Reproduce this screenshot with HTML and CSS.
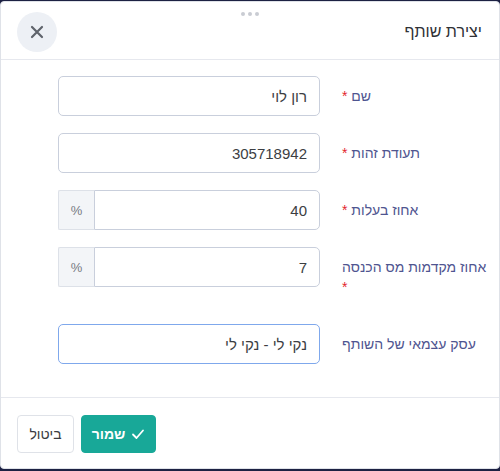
FILE: index.html
```html
<!DOCTYPE html>
<html lang="he" dir="rtl">
    <head>
        <meta charset="utf-8">
        <link rel="stylesheet" href="styles.css">
    </head>
    <body>
        <div class="modal">
            <div class="modalHeader">
                <div class="dragHandle"><span></span><span></span><span></span></div>
                <div class="modalTitle">יצירת שותף</div>
                <button class="closeButton" type="button">
                    <svg width="14" height="14" viewBox="0 0 14 14">
                        <path d="M2 2 L12 12 M12 2 L2 12" stroke="#5f636b" stroke-width="2.2" stroke-linecap="round"/>
                    </svg>
                </button>
            </div>

            <div class="modalBody">
                <div class="formRow">
                    <label class="formLabel">שם <span class="required">*</span></label>
                    <div class="formField">
                        <input class="textInput" type="text" value="רון לוי">
                    </div>
                </div>
                <div class="formRow">
                    <label class="formLabel">תעודת זהות <span class="required">*</span></label>
                    <div class="formField">
                        <input class="textInput" type="text" value="305718942">
                    </div>
                </div>
                <div class="formRow">
                    <label class="formLabel">אחוז בעלות <span class="required">*</span></label>
                    <div class="formField inputGroup">
                        <input class="textInput" type="text" value="40">
                        <span class="inputAddon">%</span>
                    </div>
                </div>
                <div class="formRow">
                    <label class="formLabel">אחוז מקדמות מס הכנסה <span class="required">*</span></label>
                    <div class="formField inputGroup">
                        <input class="textInput" type="text" value="7">
                        <span class="inputAddon">%</span>
                    </div>
                </div>
                <div class="formRow">
                    <label class="formLabel">עסק עצמאי של השותף</label>
                    <div class="formField">
                        <input class="textInput focused" type="text" value="נקי לי - נקי לי">
                    </div>
                </div>
            </div>

            <div class="modalFooter">
                <button class="btn btnSave" type="button">
                    <svg width="14" height="14" viewBox="0 0 14 14">
                        <path d="M2 7.5 L5.5 11 L12 3.5" fill="none" stroke="#fff" stroke-width="1.8" stroke-linecap="round" stroke-linejoin="round"/>
                    </svg>
                    שמור
                </button>
                <button class="btn btnCancel" type="button">ביטול</button>
            </div>
        </div>
    </body>
</html>
```

FILE: styles.css
```css
body {
    margin: 0;
    background: #1d2143;
    font-family: "Liberation Sans", Arial, sans-serif;
    overflow: hidden;
}

.modal {
    margin-top: 1px;
    height: 468px;
    box-sizing: border-box;
    background: #fff;
    border: 1px solid #dfe2e8;
    border-radius: 4px;
    display: flex;
    flex-direction: column;
}

.modalHeader {
    position: relative;
    height: 58px;
    box-sizing: border-box;
    display: flex;
    align-items: center;
    justify-content: space-between;
    padding: 0 17px 0 16px;
    border-bottom: 1px solid #e6e8ee;
}

.dragHandle {
    position: absolute;
    top: 10px;
    left: 50%;
    transform: translateX(-50%);
    display: flex;
    gap: 3px;
}

.dragHandle span {
    width: 4px;
    height: 4px;
    border-radius: 50%;
    background: #c9ccd3;
}

.modalTitle {
    font-size: 16px;
    color: #2f3136;
    margin-top: 2px;
}

.closeButton {
    width: 40px;
    height: 40px;
    border: none;
    border-radius: 50%;
    background: #edf0f5;
    display: flex;
    align-items: center;
    justify-content: center;
    padding: 0;
    margin-top: 2px;
}

.modalBody {
    flex: 1;
    padding: 16px 10px 0 17px;
}

.formRow {
    display: flex;
    gap: 22px;
    margin-bottom: 17px;
}

.formLabel {
    flex: 0 0 147px;
    padding: 10px 0;
    line-height: 20px;
    font-size: 14px;
    color: #4f5590;
    text-align: left;
}

.required {
    color: #e3262d;
}

.formField {
    flex: 0 0 262px;
    display: flex;
}

.textInput {
    flex: 1;
    min-width: 0;
    height: 40px;
    box-sizing: border-box;
    border: 1px solid #c9cfdc;
    border-radius: 5px;
    padding: 0 12px;
    font-family: "Liberation Sans", Arial, sans-serif;
    font-size: 15px;
    color: #3c3e43;
    text-align: right;
    direction: rtl;
    outline: none;
}

.textInput.focused {
    border-color: #7fa8ec;
}

.inputGroup .textInput {
    border-top-left-radius: 0;
    border-bottom-left-radius: 0;
}

.inputAddon {
    width: 36px;
    height: 40px;
    box-sizing: border-box;
    display: flex;
    align-items: center;
    justify-content: center;
    background: #f3f5f8;
    border: 1px solid #dde1e8;
    border-right: none;
    border-top-left-radius: 2px;
    border-bottom-left-radius: 2px;
    font-size: 13px;
    color: #777b83;
}

.modalFooter {
    border-top: 1px solid #e6e8ee;
    padding: 17px 16px 15px;
    display: flex;
    justify-content: flex-end;
    gap: 7px;
}

.btn {
    height: 38px;
    box-sizing: border-box;
    border-radius: 4px;
    font-family: "Liberation Sans", Arial, sans-serif;
    font-size: 14px;
    display: flex;
    align-items: center;
    justify-content: center;
    gap: 6px;
    padding: 0;
}

.btnSave {
    width: 75px;
    background: #18a898;
    border: 1px solid #18a898;
    color: #fff;
    font-weight: bold;
}

.btnCancel {
    width: 57px;
    background: #fff;
    border: 1px solid #dfe2e8;
    color: #3a3c42;
}
```
